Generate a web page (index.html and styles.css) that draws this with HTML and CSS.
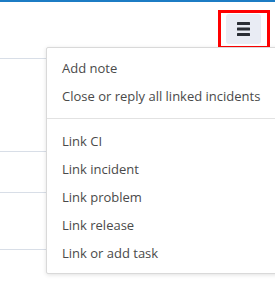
FILE: index.html
```html
<!DOCTYPE html>
<html lang="en">
<head>
<meta charset="UTF-8" />
<meta name="viewport" content="width=device-width, initial-scale=1" />
<title>Actions menu</title>
<link rel="stylesheet" href="styles.css">
</head>
<body>
  <div class="page">
    <div class="toolbar">
      <div class="highlight">
        <button class="menu-btn" aria-label="Actions">
          <svg width="13" height="14" viewBox="0 0 13 14">
            <rect x="0" y="0" width="13" height="3" rx="0.5" fill="#2a2e35" />
            <rect x="0" y="5.5" width="13" height="3" rx="0.5" fill="#2a2e35" />
            <rect x="0" y="11" width="13" height="3" rx="0.5" fill="#2a2e35" />
          </svg>
        </button>
      </div>
    </div>

    <div class="rows">
      <div class="row row-tall"></div>
      <div class="row row-short"></div>
      <div class="row row-mid"></div>
    </div>

    <ul class="dropdown">
      <li>Add note</li>
      <li>Close or reply all linked incidents</li>
      <li class="divider"></li>
      <li>Link CI</li>
      <li>Link incident</li>
      <li>Link problem</li>
      <li>Link release</li>
      <li>Link or add task</li>
    </ul>
  </div>
</body>
</html>
```

FILE: styles.css
```css
body {
  margin: 0;
  font-family: 'Open Sans', 'Segoe UI', sans-serif;
  background: #fff;
  overflow: hidden;
}
.page {
  position: relative;
  width: 275px;
  height: 288px;
  border-top: 2px solid #1c7cc4;
  box-sizing: border-box;
  overflow: hidden;
}
.toolbar {
  display: flex;
  justify-content: flex-end;
  padding: 8px 5px 9px 0;
}
.highlight {
  display: flex;
  border: 3px solid #ff0000;
  padding: 1px 6px 2px 5px;
}
.menu-btn {
  display: flex;
  align-items: center;
  justify-content: center;
  width: 35px;
  height: 30px;
  padding: 0;
  border: none;
  border-radius: 3px;
  background: #e9ecf4;
  cursor: pointer;
}
.rows {
  border-top: 1px solid #d8dee7;
}
.row {
  border-bottom: 1px solid #d8dee7;
}
.row-tall { height: 92px; }
.row-short { height: 40px; }
.row-mid { height: 56px; }

.dropdown {
  position: absolute;
  top: 45px;
  left: 46px;
  width: 250px;
  margin: 0;
  padding: 6px 0 6px;
  list-style: none;
  background: #fff;
  border: 1px solid #d9d9d9;
  border-radius: 2px;
  box-shadow: 0 1px 4px rgba(0, 0, 0, 0.12);
}
.dropdown li {
  height: 28px;
  line-height: 28px;
  padding: 0 15px;
  font-size: 13px;
  color: #4a4a4a;
  white-space: nowrap;
}
.dropdown li.divider {
  height: 1px;
  padding: 0;
  margin: 8px 0;
  background: #e2e2e2;
}
```
